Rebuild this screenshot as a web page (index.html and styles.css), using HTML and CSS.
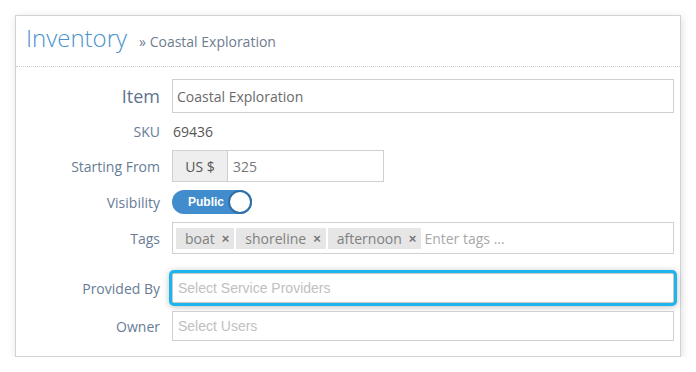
FILE: index.html
```html
<!DOCTYPE html>
<html>
<head>
<meta charset="utf-8">
<link rel="stylesheet" href="styles.css">
</head>
<body>
<div class="card">
  <div class="header">
    <span class="title">Inventory</span>
    <span class="crumb">» Coastal Exploration</span>
  </div>
  <div class="form">
    <label class="lbl lbl-big">Item</label>
    <div class="field"><div class="input input-item">Coastal Exploration</div></div>

    <label class="lbl lbl-sku">SKU</label>
    <div class="field field-sku"><span class="static">69436</span></div>

    <label class="lbl">Starting From</label>
    <div class="field">
      <div class="group">
        <span class="addon">US $</span>
        <span class="input input-price">325</span>
      </div>
    </div>

    <label class="lbl">Visibility</label>
    <div class="field">
      <div class="toggle"><span class="toggle-text">Public</span><span class="knob"></span></div>
    </div>

    <label class="lbl">Tags</label>
    <div class="field">
      <div class="input tags">
        <span class="chip">boat<span class="x">×</span></span>
        <span class="chip">shoreline<span class="x">×</span></span>
        <span class="chip">afternoon<span class="x">×</span></span>
        <span class="tag-ph">Enter tags ...</span>
      </div>
    </div>

    <label class="lbl lbl-prov">Provided By</label>
    <div class="field field-prov"><div class="input select focus"><span class="ph">Select Service Providers</span></div></div>

    <label class="lbl">Owner</label>
    <div class="field"><div class="input select"><span class="ph">Select Users</span></div></div>
  </div>
</div>
</body>
</html>
```
FILE: styles.css
```css
html, body {
  margin: 0;
  padding: 0;
  background: #ffffff;
}
body {
  padding: 15px 16px 0 15px;
  font-family: "Open Sans", "Liberation Sans", sans-serif;
}
.card {
  width: 664px;
  border: 1px solid #d2d2d2;
  background: #fff;
  box-shadow: 1px 2px 8px rgba(0, 0, 0, 0.13);
}
.header {
  height: 51px;
  border-bottom: 1px dotted #cfcfcf;
  padding-left: 10px;
  display: flex;
  align-items: baseline;
  box-sizing: border-box;
  padding-top: 2px;
}
.title {
  font-size: 24px;
  font-weight: 300;
  color: #4a92cd;
  line-height: 40px;
}
.crumb {
  font-size: 14px;
  color: #6f7d8e;
  margin-left: 12px;
}
.form {
  display: grid;
  grid-template-columns: 144px 1fr;
  column-gap: 12px;
  row-gap: 8px;
  padding: 12px 6px 15px 0;
}
.lbl {
  text-align: right;
  font-size: 14px;
  color: #687c96;
  display: flex;
  align-items: center;
  justify-content: flex-end;
}
.lbl-big {
  font-size: 18px;
  color: #5e7390;
}
.field {
  display: flex;
  align-items: center;
}
.field-sku {
  height: 21px;
}
.static {
  font-size: 14px;
  color: #555;
  padding-left: 1px;
}
.input {
  box-sizing: border-box;
  border: 1px solid #d0d0d0;
  background: #fff;
  font-size: 14px;
  color: #6a6a6a;
  width: 100%;
  display: flex;
  align-items: center;
}
.input-item {
  height: 34px;
  padding-left: 4px;
}
.group {
  display: flex;
  height: 32px;
  width: 212px;
}
.addon {
  box-sizing: border-box;
  width: 55px;
  background: #eeeeee;
  border: 1px solid #d0d0d0;
  border-right: none;
  display: flex;
  align-items: center;
  justify-content: center;
  font-size: 14px;
  color: #555;
}
.input-price {
  flex: 1;
  padding-left: 5px;
  color: #777;
}
.toggle {
  position: relative;
  width: 80px;
  height: 24px;
  border-radius: 12px;
  background: #418ccc;
  display: flex;
  align-items: center;
}
.toggle-text {
  font-family: "Liberation Sans", Arial, sans-serif;
  font-weight: bold;
  font-size: 12px;
  color: #fff;
  margin-left: 16px;
}
.knob {
  position: absolute;
  right: 0;
  top: 0;
  width: 24px;
  height: 24px;
  box-sizing: border-box;
  border-radius: 50%;
  background: #fff;
  border: 2px solid #2f6fa8;
}
.tags {
  height: 32px;
  padding-left: 3px;
  gap: 2px;
}
.chip {
  background: #e6e6e6;
  color: #808080;
  height: 21px;
  display: flex;
  align-items: center;
  padding: 0 5px 0 9px;
  font-size: 14px;
}
.x {
  font-family: "Liberation Sans", Arial, sans-serif;
  font-weight: bold;
  font-size: 13px;
  color: #777;
  margin-left: 7px;
}
.tag-ph {
  color: #a8a8a8;
  margin-left: 1px;
}
.select {
  height: 30px;
  padding-left: 5px;
}
.ph {
  font-family: "Liberation Sans", Arial, sans-serif;
  font-size: 14px;
  color: #c0c0c0;
}
.lbl-prov, .field-prov {
  margin-top: 11px;
}
.focus {
  border-color: #c8c8c8;
  border-radius: 2px;
  box-shadow: 0 0 0 3px #1db5ec, 0 1px 6px 3px rgba(0, 0, 0, 0.25);
}
```
